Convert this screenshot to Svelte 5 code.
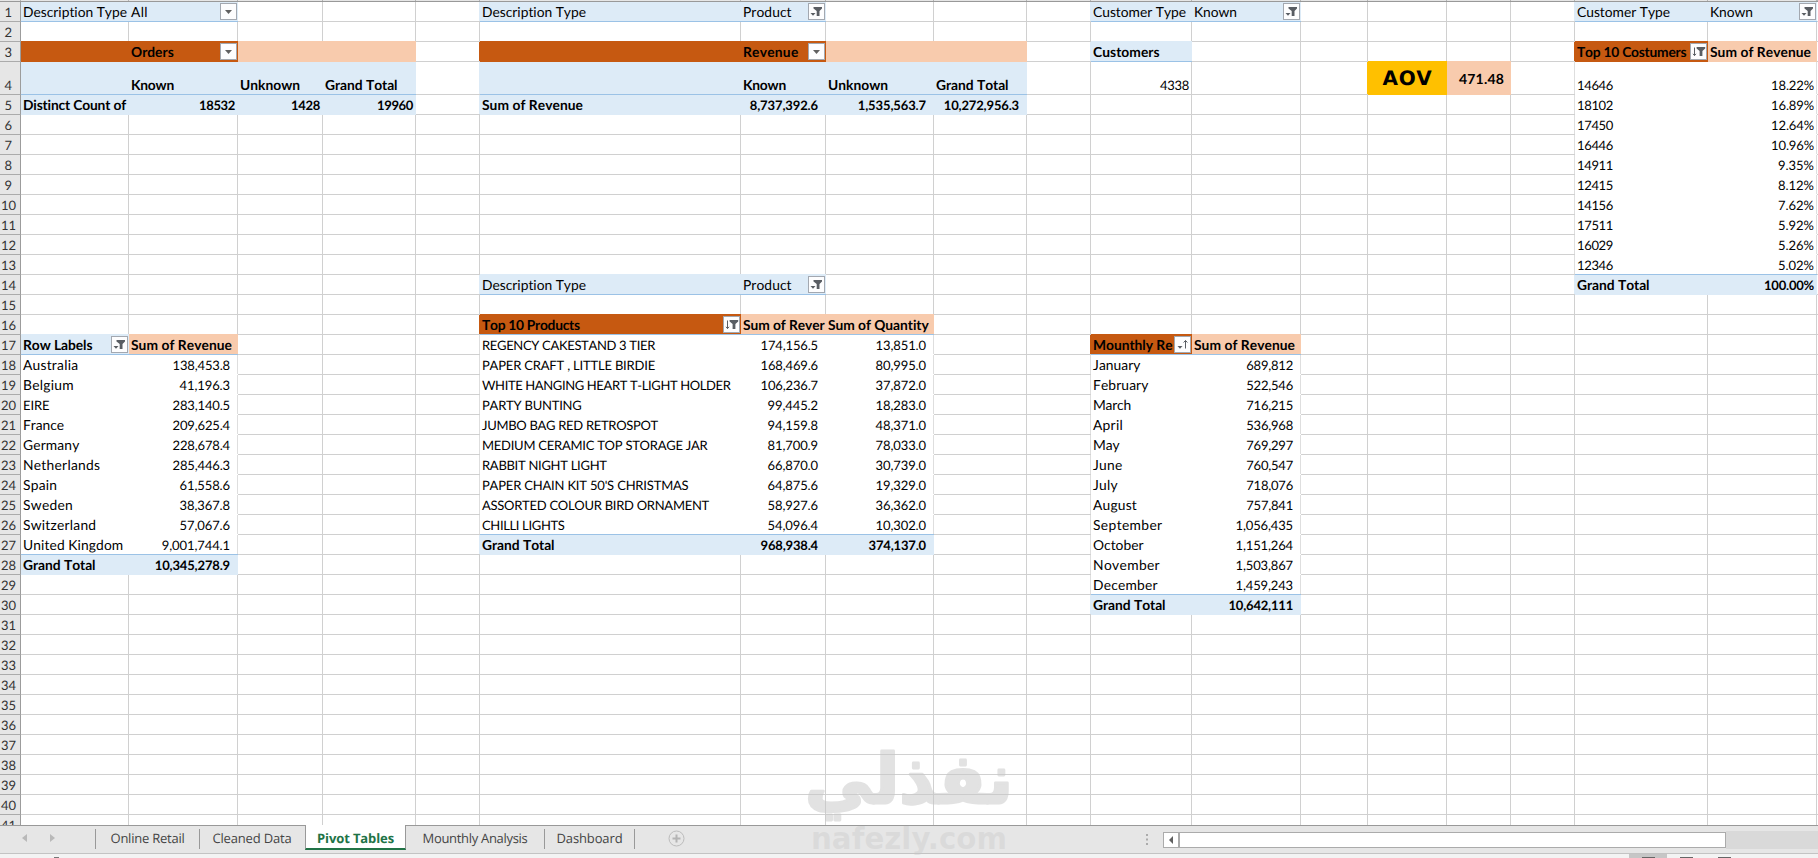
<script>
  const widths = [108, 109, 85, 93, 64, 261, 85, 108, 93, 64, 101, 109, 67, 79, 64, 64, 133, 109, 1];
  const columns = '21px ' + widths.map((w) => w + 'px').join(' ');
  const rowCount = 41;
  const BLUE = '#ddebf7', RUST = '#c65911', PEACH = '#f8cbad', GOLD = '#ffc000', LINE = '#9bc2e6', GRID = '#d0d0d0';

  const cells = {};
  const put = (r, c, o) => (cells[r + ':' + c] = { ...(cells[r + ':' + c] || {}), ...o });
  const fill = (r, c0, c1, color, line = false) => {
    for (let c = c0; c <= c1; c++) put(r, c, { fill: color, line });
  };
  const label = (r, c, text, w, o = {}) => put(r, c, { text, w, mixed: text !== text.toUpperCase(), ...o });
  // digits share one advance, separators are narrower
  const numWidth = (t) => [...t].reduce((s, ch) => s + (ch === '%' ? 10.2 : /\d/.test(ch) ? 7 : 3.75), 0);
  const num = (r, c, text, pad = 7, o = {}) => put(r, c, { text, w: numWidth(text), right: pad, ...o });
  const B = { bold: true };

  // report filters
  fill(1, 0, 1, BLUE, true);
  label(1, 0, 'Description Type', 103);
  label(1, 1, 'All', 16, { button: 'drop' });
  for (const r of [1, 14]) {
    fill(r, 5, 6, BLUE, true);
    label(r, 5, 'Description Type', 103);
    label(r, 6, 'Product', 47.6, { button: 'filter' });
  }
  for (const c of [10, 16]) {
    fill(1, c, c + 1, BLUE, true);
    label(1, c, 'Customer Type', 92);
    label(1, c + 1, 'Known', 42, { button: 'filter' });
  }

  // orders and revenue by customer type
  const summary = (c, title, w, row, rw, values, pads) => {
    fill(3, c, c + 1, RUST);
    fill(3, c + 2, c + 3, PEACH);
    fill(4, c, c + 3, BLUE, true);
    fill(5, c, c + 3, BLUE);
    label(3, c + 1, title, w, { bold: true, button: 'drop' });
    label(4, c + 1, 'Known', 42, B);
    label(4, c + 2, 'Unknown', 59, B);
    label(4, c + 3, 'Grand Total', 71.5, B);
    label(5, c, row, rw, B);
    values.forEach((v, i) => num(5, c + 1 + i, v, pads[i], B));
  };
  summary(0, 'Orders', 41.7, 'Distinct Count of', 102, ['18532', '1428', '19960'], [1, 1, 1]);
  summary(5, 'Revenue', 54.5, 'Sum of Revenue', 100, ['8,737,392.6', '1,535,563.7', '10,272,956.3'], [6, 6, 6]);

  // customers and average order value
  fill(3, 10, 10, BLUE, true);
  label(3, 10, 'Customers', 65.7, B);
  num(4, 10, '4338', 1);
  put(4, 13, { fill: GOLD, text: 'AOV', w: 49, kind: 'aov' });
  put(4, 14, { fill: PEACH, text: '471.48', w: 44, right: 5, bold: true, kind: 'mid' });

  // top customers
  fill(3, 16, 16, RUST);
  fill(3, 17, 17, PEACH);
  label(3, 16, 'Top 10 Costumers', 108.3, { bold: true, button: 'sortfilter' });
  label(3, 17, 'Sum of Revenue', 100, B);
  [['14646', '18.22%'], ['18102', '16.89%'], ['17450', '12.64%'], ['16446', '10.96%'], ['14911', '9.35%'],
   ['12415', '8.12%'], ['14156', '7.62%'], ['17511', '5.92%'], ['16029', '5.26%'], ['12346', '5.02%']].forEach(([id, p], i) => {
    put(4 + i, 16, { text: id, w: 35, body: true, line: i === 9 });
    num(4 + i, 17, p, 1, { body: true, line: i === 9 });
  });
  fill(14, 16, 17, BLUE);
  label(14, 16, 'Grand Total', 71.5, B);
  num(14, 17, '100.00%', 1, B);

  // revenue by country
  fill(17, 0, 0, BLUE, true);
  fill(17, 1, 1, PEACH, true);
  label(17, 0, 'Row Labels', 68.5, { bold: true, button: 'filter' });
  label(17, 1, 'Sum of Revenue', 100, B);
  [['Australia', 54.3, '138,453.8'], ['Belgium', 50, '41,196.3'], ['EIRE', 25.5, '283,140.5'], ['France', 40, '209,625.4'],
   ['Germany', 55.5, '228,678.4'], ['Netherlands', 76.3, '285,446.3'], ['Spain', 33.3, '61,558.6'], ['Sweden', 49, '38,367.8'],
   ['Switzerland', 72.3, '57,067.6'], ['United Kingdom', 99.3, '9,001,744.1']].forEach(([t, w, v], i) => {
    label(18 + i, 0, t, w, { body: true, line: i === 9 });
    num(18 + i, 1, v, 6, { body: true, line: i === 9 });
  });
  fill(28, 0, 1, BLUE);
  label(28, 0, 'Grand Total', 71.5, B);
  num(28, 1, '10,345,278.9', 6, B);

  // top products
  fill(16, 5, 5, RUST, true);
  fill(16, 6, 7, PEACH, true);
  label(16, 5, 'Top 10 Products', 96.7, { bold: true, button: 'sortfilter' });
  label(16, 6, 'Sum of Rever', 80.5, B);
  label(16, 7, 'Sum of Quantity', 99.7, B);
  [['REGENCY CAKESTAND 3 TIER', 172, '174,156.5', '13,851.0'], ['PAPER CRAFT , LITTLE BIRDIE', 172, '168,469.6', '80,995.0'],
   ['WHITE HANGING HEART T-LIGHT HOLDER', 247.5, '106,236.7', '37,872.0'], ['PARTY BUNTING', 98.5, '99,445.2', '18,283.0'],
   ['JUMBO BAG RED RETROSPOT', 175, '94,159.8', '48,371.0'], ['MEDIUM CERAMIC TOP STORAGE JAR', 224.5, '81,700.9', '78,033.0'],
   ['RABBIT NIGHT LIGHT', 123.7, '66,870.0', '30,739.0'], ["PAPER CHAIN KIT 50'S CHRISTMAS", 205.5, '64,875.6', '19,329.0'],
   ['ASSORTED COLOUR BIRD ORNAMENT', 226, '58,927.6', '36,362.0'], ['CHILLI LIGHTS', 81.5, '54,096.4', '10,302.0']].forEach(([t, w, a, b], i) => {
    label(17 + i, 5, t, w, { body: true, line: i === 9 });
    num(17 + i, 6, a, 6, { body: true, line: i === 9 });
    num(17 + i, 7, b, 6, { body: true, line: i === 9 });
  });
  fill(27, 5, 7, BLUE);
  label(27, 5, 'Grand Total', 71.5, B);
  num(27, 6, '968,938.4', 6, B);
  num(27, 7, '374,137.0', 6, B);

  // revenue by month
  fill(17, 10, 10, RUST, true);
  fill(17, 11, 11, PEACH, true);
  label(17, 10, 'Mounthly Re', 78.5, { bold: true, button: 'sort' });
  label(17, 11, 'Sum of Revenue', 100, B);
  [['January', 46.5, '689,812'], ['February', 54.5, '522,546'], ['March', 37, '716,215'], ['April', 29, '536,968'],
   ['May', 25.5, '769,297'], ['June', 28.5, '760,547'], ['July', 23.7, '718,076'], ['August', 43, '757,841'],
   ['September', 68.5, '1,056,435'], ['October', 49.5, '1,151,264'], ['November', 66, '1,503,867'],
   ['December', 63.7, '1,459,243']].forEach(([t, w, v], i) => {
    label(18 + i, 10, t, w, { body: true, line: i === 11 });
    num(18 + i, 11, v, 6, { body: true, line: i === 11 });
  });
  fill(30, 10, 11, BLUE);
  label(30, 10, 'Grand Total', 71.5, B);
  num(30, 11, '10,642,111', 6, B);

  const at = (r, c) => cells[r + ':' + c] || {};
  const rows = Array.from({ length: rowCount }, (_, i) => {
    const r = i + 1;
    return {
      r,
      cells: widths.map((_, c) => {
        const me = at(r, c), east = at(r, c + 1), south = at(r + 1, c);
        const rightLine = me.fill || east.fill || (me.body && east.body ? '#fff' : me.body || east.body ? '#dedede' : GRID);
        const bottomLine = me.line ? LINE : me.fill || south.fill || (me.body ? '#fff' : GRID);
        return { ...me, css: `background:${me.fill || '#fff'};box-shadow:inset -1px 0 ${rightLine};border-bottom-color:${bottomLine}` };
      })
    };
  });

  function fit(node, w) {
    const apply = () => {
      node.style.letterSpacing = '0px';
      const natural = node.getBoundingClientRect().width;
      node.style.letterSpacing = (w + 1 - natural) / node.textContent.length + 'px';
    };
    apply();
    document.fonts?.ready.then(apply);
  }

  const tabs = [
    { name: 'Online Retail', size: 104, w: 73 },
    { name: 'Cleaned Data', size: 105, w: 78 },
    { name: 'Pivot Tables', size: 101, w: 76, active: true },
    { name: 'Mounthly Analysis', size: 139, w: 104 },
    { name: 'Dashboard', size: 90, w: 65 }
  ];
</script>

<div class="app">
  <div class="colheads" style:grid-template-columns={columns}>
    <i></i>{#each widths as _}<i></i>{/each}
  </div>
  <div class="sheet">
    {#each rows as row}
      <div class="row" class:tall={row.r === 4} class:cut={row.r === 41} style:grid-template-columns={columns}>
        <div class="rowhead"><span use:fit={String(row.r).length * 7}>{row.r}</span></div>
        {#each row.cells as cell}
          <div class="cell {cell.kind || ''}" class:bold={cell.bold} class:mixed={cell.mixed} class:num={cell.right !== undefined} style={cell.css}>
            {#if cell.text}<span use:fit={cell.w} style:margin-right={(cell.right ?? 0) + 'px'}>{cell.text}</span>{/if}
            {#if cell.button}
              <svg class="btn" width="17" height="17" viewBox="0 0 17 17">
                <rect x=".5" y=".5" width="16" height="16" fill="#fdfdfe" stroke="#a3a8b0" />
                {#if cell.button === 'drop'}
                  <path d="M5 7h7l-3.5 4z" fill="#606060" />
                {:else if cell.button === 'filter'}
                  <path d="M5.5 4h8.5v1.4L11.5 8v5H8.7V8L5.5 5.4z" fill="#595d63" />
                  <path d="M2.5 10h5L5 12.7z" fill="#595d63" />
                {:else if cell.button === 'sortfilter'}
                  <path d="M6.6 4h8.6v1.4L12.4 8v5H9.6V8L6.6 5.4z" fill="#595d63" />
                  <path d="M4.5 4.5v8M3 10.8l1.5 1.8L6 10.8" fill="none" stroke="#595d63" />
                {:else}
                  <path d="M3.5 10h5L6 12.7z" fill="#595d63" />
                  <path d="M11.5 12.5v-8M9.6 6.5l1.9-2 1.9 2" fill="none" stroke="#595d63" />
                {/if}
              </svg>
            {/if}
          </div>
        {/each}
      </div>
    {/each}
  </div>

  <div class="tabbar">
    <div class="arrows">
      <svg width="5" height="8"><path d="M5 0v8L0 4z" fill="#b9b9b9" /></svg>
      <svg width="5" height="8"><path d="M0 0v8l5-4z" fill="#b9b9b9" /></svg>
    </div>
    {#each tabs as tab}
      <div class="tab" class:active={tab.active} style:width={tab.size + 'px'}><span use:fit={tab.w}>{tab.name}</span></div>
    {/each}
    <svg class="plus" width="17" height="17" viewBox="0 0 17 17">
      <circle cx="8.5" cy="8.5" r="7.5" fill="none" stroke="#bcbcbc" />
      <path d="M8.5 4.5v8M4.5 8.5h8" stroke="#b4b4b4" stroke-width="2" />
    </svg>
    <div class="scroll">
      <svg width="2" height="11"><path d="M0 0h2v2H0zM0 4.5h2v2H0zM0 9h2v2H0z" fill="#ababab" /></svg>
      <div class="left"><svg width="4" height="8"><path d="M4 0v8L0 4z" fill="#606060" /></svg></div>
      <div class="thumb"></div>
      <div class="track"></div>
    </div>
  </div>
  <div class="status">
    <i class="rec"></i>
    <div class="view on"><i></i></div>
    <div class="view"><i></i></div>
    <div class="view"><i></i></div>
  </div>

  <svg class="mark" width="230" height="120" viewBox="0 0 230 120">
    <g class="arwrap" transform="translate(0 58) scale(1 1.15)">
      <text class="ar" x="112" y="0" text-anchor="middle" textLength="208" lengthAdjust="spacingAndGlyphs" direction="rtl">نفذلي</text>
    </g>
    <text class="en" x="14" y="104" textLength="196" lengthAdjust="spacingAndGlyphs">nafezly.com</text>
  </svg>
</div>

<style>
  :global(body) { margin: 0; overflow: hidden; background: #fff; }
  .app { position: relative; width: 1818px; height: 858px; overflow: hidden; font-family: Lato, "Noto Sans", sans-serif; font-size: 13px; color: #000; }
  .colheads { display: grid; height: 1px; background: #e6e6e6; border-bottom: 1px solid #999; }
  .colheads i { border-right: 1px solid #b5b5b5; }
  .row { display: grid; height: 20px; }
  .tall { height: 33px; }
  .cut { height: 10px; overflow: hidden; }
  .rowhead { display: flex; justify-content: center; align-items: flex-end; box-sizing: border-box; height: 100%; padding-right: 3px; background: #e6e6e6; border-right: 1px solid #9c9c9c; border-bottom: 1px solid #ababab; color: #333; }
  .cut .rowhead, .cut .cell { height: 20px; }
  .cell { position: relative; display: flex; align-items: flex-end; box-sizing: border-box; height: 100%; min-width: 0; padding-left: 2px; overflow: hidden; border-bottom: 1px solid; }
  .cell span, .rowhead span { flex: none; line-height: 17px; white-space: pre; text-rendering: geometricPrecision; font-kerning: none; font-variant-ligatures: none; }
  .num { justify-content: flex-end; padding: 0 2px 0 0; }
  .mixed { font-size: 13.8px; }
  .mixed span { line-height: 19px; }
  .bold { font-weight: 700; }
  .aov { justify-content: center; align-items: center; padding: 0; font-family: "DejaVu Sans", sans-serif; font-size: 20px; font-weight: 700; }
  .aov span { line-height: 30px; padding-bottom: 1px; }
  .mid { align-items: center; font-size: 14px; }
  .mid span { padding-bottom: 0; }
  .btn { position: absolute; right: 1px; top: 1px; }

  .tabbar { display: flex; box-sizing: border-box; height: 29px; background: #e6e6e6; border-top: 1px solid #999; border-bottom: 1px solid #c3c3c3; font-family: "Open Sans", sans-serif; color: #444; }
  .arrows { display: flex; gap: 23px; box-sizing: border-box; width: 96px; height: 20px; margin-top: 3px; padding: 5px 0 0 22px; border-right: 1px solid #999; }
  .tab { flex: none; display: flex; justify-content: center; box-sizing: border-box; height: 20px; margin-top: 3px; border-right: 1px solid #999; }
  .tab span { line-height: 19px; white-space: pre; text-rendering: geometricPrecision; }
  .tab:nth-child(3) { border-right-color: transparent; }
  .tab.active { height: 25px; margin-top: -1px; padding-top: 4px; background: #fff; border-right: 1px solid #999; border-left: 1px solid #999; border-bottom: 2px solid #217346; color: #217346; font-weight: 700; }
  .plus { flex: none; margin: 4px 0 0 33px; }
  .scroll { display: flex; margin-left: auto; height: 16px; margin-top: 6px; }
  .scroll > svg { margin: 2px 15px 0 0; }
  .left { display: flex; align-items: center; justify-content: center; box-sizing: border-box; width: 16px; height: 16px; background: #fff; border: 1px solid #ababab; }
  .thumb { box-sizing: border-box; width: 547px; height: 16px; background: #fff; border: 1px solid #ababab; }
  .track { width: 92px; height: 18px; margin-top: -1px; background: #d9d9d9; }
  .status { display: flex; height: 4px; background: #f3f3f3; }
  .rec { width: 5px; height: 1px; margin: 3px 0 0 54px; background: #777; }
  .view { display: flex; justify-content: center; align-items: flex-end; width: 38px; }
  .view i { width: 13px; height: 1px; background: #666; }
  .view.on { margin-left: 1570px; background: #c6c6c6; }

  .mark { position: absolute; left: 797px; top: 745px; overflow: visible; pointer-events: none; fill: #c8c8c8; }
  .arwrap { opacity: .52; stroke: #c8c8c8; stroke-width: 2.5; stroke-linejoin: round; }
  .ar { font-family: "DejaVu Sans", sans-serif; font-weight: 700; font-size: 60px; }
  .en { font-family: "DejaVu Sans", sans-serif; font-weight: 700; font-size: 31px; fill-opacity: .38; }
</style>
